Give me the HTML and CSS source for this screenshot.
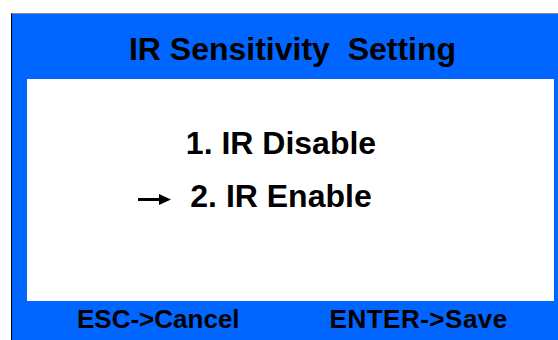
FILE: index.html
```html
<!DOCTYPE html>
<html>
<head>
<meta charset="utf-8">
<link rel="stylesheet" href="styles.css">
</head>
<body>
<div class="screen">
  <div class="title">IR Sensitivity&nbsp; Setting</div>
  <div class="panel">
    <div class="menu">
      <div class="item">1. IR Disable</div>
      <div class="item selected">
        <svg class="marker" width="33" height="11" viewBox="0 0 33 11"><path d="M0 4 H21 V0 L33 5.5 L21 11 V7 H0 Z" fill="#000"/></svg>2. IR Enable</div>
    </div>
  </div>
  <div class="footer">
    <span class="key">ESC-&gt;Cancel</span>
    <span class="key key-wide">ENTER-&gt;Save</span>
  </div>
</div>
</body>
</html>
```

FILE: styles.css
```css
html, body {
  margin: 0;
  padding: 0;
  background: #fff;
}
body {
  width: 558px;
  height: 340px;
  overflow: hidden;
  font-family: "Liberation Sans", Arial, sans-serif;
  font-weight: bold;
  color: #000;
}
.screen {
  margin: 13px 0 0 11px;
  height: 327px;
  box-sizing: border-box;
  border-top: 1px solid #8c8c8c;
  border-left: 1px solid #000;
  background: #0066ff;
  display: flex;
  flex-direction: column;
}
.title {
  font-size: 32px;
  line-height: 32px;
  height: 65px;
  box-sizing: border-box;
  padding: 19px 0 0 15px;
  text-align: center;
}
.panel {
  background: #fff;
  margin: 0 4px 0 15px;
  height: 222px;
  box-sizing: border-box;
  padding: 38px 19px 0 0;
}
.menu {
  display: flex;
  flex-direction: column;
  align-items: center;
}
.item {
  position: relative;
  font-size: 32px;
  line-height: 53px;
  white-space: nowrap;
}
.marker {
  position: absolute;
  right: 100%;
  top: 24px;
  margin-right: 19px;
}
.footer {
  flex: 1;
  display: flex;
  padding: 5px 0 0 65px;
  gap: 90px;
  font-size: 26px;
  line-height: 26px;
}
.key {
  white-space: nowrap;
}
.key-wide {
  letter-spacing: 0.5px;
}
```
